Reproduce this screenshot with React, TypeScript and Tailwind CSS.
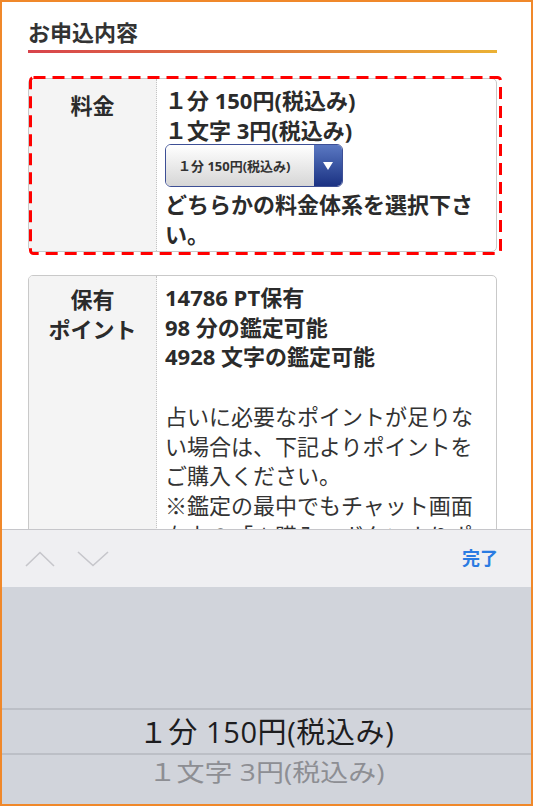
import React from 'react';

const jp = "font-['Open_Sans','Noto_Sans_CJK_JP',sans-serif]";

function DashedOutline() {
  return (
    <svg className="absolute -left-[0px] -top-[2px] pointer-events-none" width="475" height="180" viewBox="0 0 475 180">
      <rect x="2.5" y="1.5" width="470" height="176" rx="3" fill="none" stroke="#ff0000" strokeWidth="3" strokeDasharray="12 7" />
    </svg>
  );
}

function PriceSelect() {
  return (
    <div className="flex h-[43px] w-[178px] overflow-hidden rounded-[6px] border border-[#3d4f95]">
      <div className="flex flex-1 items-center bg-linear-to-b from-white to-[#d6d6d6] pl-[12px] text-[13px] text-[#333]">
        １分 150円(税込み)
      </div>
      <div className="flex w-[28px] items-center justify-center bg-linear-to-b from-[#5b78c2] to-[#1c3283]">
        <svg width="10" height="8" viewBox="0 0 10 8">
          <path d="M0 0 H10 L5 8 Z" fill="#ffffff" />
        </svg>
      </div>
    </div>
  );
}

export default function App() {
  return (
    <div className={`flex h-[806px] w-[533px] flex-col overflow-hidden border-2 border-[#f0882a] bg-white ${jp}`}>
      <div className="h-[527px] shrink-0 overflow-hidden pl-[26px] pt-[14px]">
        <h2 className="text-[22px] leading-[32px] font-bold text-[#333]">お申込内容</h2>
        <div className="mt-[2px] h-[3px] w-[469px] bg-linear-to-r from-[#d8434c] via-[#e0783a] to-[#ebb134]" />

        <div className="relative mt-[25px] w-[469px]">
          <div className="flex overflow-hidden rounded-[5px] border border-[#c9c9c9]">
            <div className="w-[128px] shrink-0 border-r border-dotted border-[#c4c4c4] bg-[#f4f4f4] pt-[11px] text-center text-[22px] leading-[30px] font-bold text-[#2b2b2b]">
              料金
            </div>
            <div className="flex-1 pb-[2px] pl-[8px] pt-[6px] text-[22px] leading-[30px] font-bold text-[#2b2b2b]">
              <p>１分 150円(税込み)</p>
              <p>１文字 3円(税込み)</p>
              <div className="mb-[2px] mt-[-1px]">
                <PriceSelect />
              </div>
              <p>どちらかの料金体系を選択下さい。</p>
            </div>
          </div>
          <DashedOutline />
        </div>

        <div className="mt-[23px] flex w-[469px] overflow-hidden rounded-[5px] border border-[#c9c9c9]">
          <div className="w-[128px] shrink-0 border-r border-dotted border-[#c4c4c4] bg-[#f4f4f4] pt-[9px] text-center text-[22px] leading-[29.5px] font-bold text-[#2b2b2b]">
            保有
            <br />
            ポイント
          </div>
          <div className="flex-1 pl-[8px] pr-[6px] pt-[7px] text-[22px] leading-[29.7px] text-[#333]">
            <p className="font-bold text-[#2b2b2b]">14786 PT保有</p>
            <p className="font-bold text-[#2b2b2b]">98 分の鑑定可能</p>
            <p className="font-bold text-[#2b2b2b]">4928 文字の鑑定可能</p>
            <p>&nbsp;</p>
            <p>占いに必要なポイントが足りない場合は、下記よりポイントをご購入ください。</p>
            <p>※鑑定の最中でもチャット画面右上の「＋購入」ボタンよりポイントを購入できます。</p>
          </div>
        </div>
      </div>

      <div className="flex h-[58px] shrink-0 items-center justify-between border-t border-[#c6c6ca] bg-[#efeff2] pl-[23px] pr-[33px]">
        <div className="flex items-center gap-[22px]">
          <svg width="30" height="16" viewBox="0 0 30 16">
            <path d="M1 15 L15 1.5 L29 15" fill="none" stroke="#c6c6cb" strokeWidth="1.6" />
          </svg>
          <svg width="32" height="16" viewBox="0 0 32 16">
            <path d="M1 1 L16 14.5 L31 1" fill="none" stroke="#c6c6cb" strokeWidth="1.6" />
          </svg>
        </div>
        <span className="text-[18px] font-bold text-[#2a7be2]">完了</span>
      </div>

      <div className="flex flex-1 flex-col overflow-hidden bg-[#d1d4db]">
        <div className="h-[121px] shrink-0" />
        <div className="flex h-[47px] shrink-0 items-center justify-center border-y-2 border-[#bcbfc6] text-[29px] tracking-[0.6px] text-[#1d1d1f]">
          １分 150円(税込み)
        </div>
        <div className="flex h-[40px] shrink-0 origin-top scale-y-[0.85] items-center justify-center text-[28px] text-[#8d8e93]">
          １文字 3円(税込み)
        </div>
      </div>
    </div>
  );
}
